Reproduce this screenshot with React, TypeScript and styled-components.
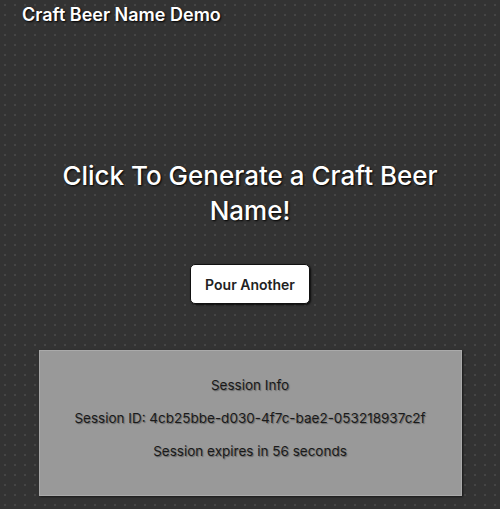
import React from "react";
import styled, { createGlobalStyle } from "styled-components";

const Global = createGlobalStyle`
  html, body {
    margin: 0;
    padding: 0;
    background-color: #333333;
    background-image: radial-gradient(rgba(255,255,255,0.09) 0.8px, transparent 1.2px);
    background-size: 10px 10px;
    min-height: 100%;
  }
  body {
    font-family: Inter, "Noto Sans", sans-serif;
    min-height: 509px;
  }
`;

const Page = styled.div`
  display: flex;
  flex-direction: column;
  align-items: center;
  min-height: 509px;
`;

const Header = styled.header`
  align-self: stretch;
  padding: 3px 22px 0;
`;

const SiteTitle = styled.h1`
  margin: 0;
  font-size: 18px;
  line-height: 24px;
  font-weight: 600;
  color: #ffffff;
  text-shadow: 1px 1px 2px #000;
`;

const Hero = styled.h2`
  margin: 131px 0 0;
  max-width: 440px;
  font-size: 26px;
  line-height: 35px;
  font-weight: 500;
  color: #ffffff;
  text-align: center;
  text-shadow: 1px 1px 2px #000;
`;

const PourButton = styled.button`
  margin-top: 36px;
  height: 40px;
  padding: 0 14px;
  background: #ffffff;
  border: 1px solid #111;
  border-radius: 5px;
  font-family: Inter, sans-serif;
  font-size: 14px;
  font-weight: 600;
  color: #222;
  box-shadow: 1px 1px 2px rgba(0,0,0,0.8);
  cursor: pointer;
`;

const SessionBox = styled.section`
  margin-top: 46px;
  width: 423px;
  height: 146px;
  box-sizing: border-box;
  background: #999999;
  border: 1px solid #aaaaaa;
  box-shadow: 1px 1px 2px rgba(0,0,0,0.5);
  display: flex;
  flex-direction: column;
  align-items: center;
  padding-top: 25px;
  gap: 15px;
`;

const InfoLine = styled.p`
  margin: 0;
  font-size: 13.5px;
  line-height: 18px;
  color: #1a1a1a;
  text-shadow: 1px 1px 1px rgba(0,0,0,0.35);
`;

export default function App() {
  return (
    <>
      <Global />
      <Page>
        <Header>
          <SiteTitle>Craft Beer Name Demo</SiteTitle>
        </Header>
        <Hero>Click To Generate a Craft Beer Name!</Hero>
        <PourButton>Pour Another</PourButton>
        <SessionBox>
          <InfoLine>Session Info</InfoLine>
          <InfoLine>Session ID: 4cb25bbe-d030-4f7c-bae2-053218937c2f</InfoLine>
          <InfoLine>Session expires in 56 seconds</InfoLine>
        </SessionBox>
      </Page>
    </>
  );
}
